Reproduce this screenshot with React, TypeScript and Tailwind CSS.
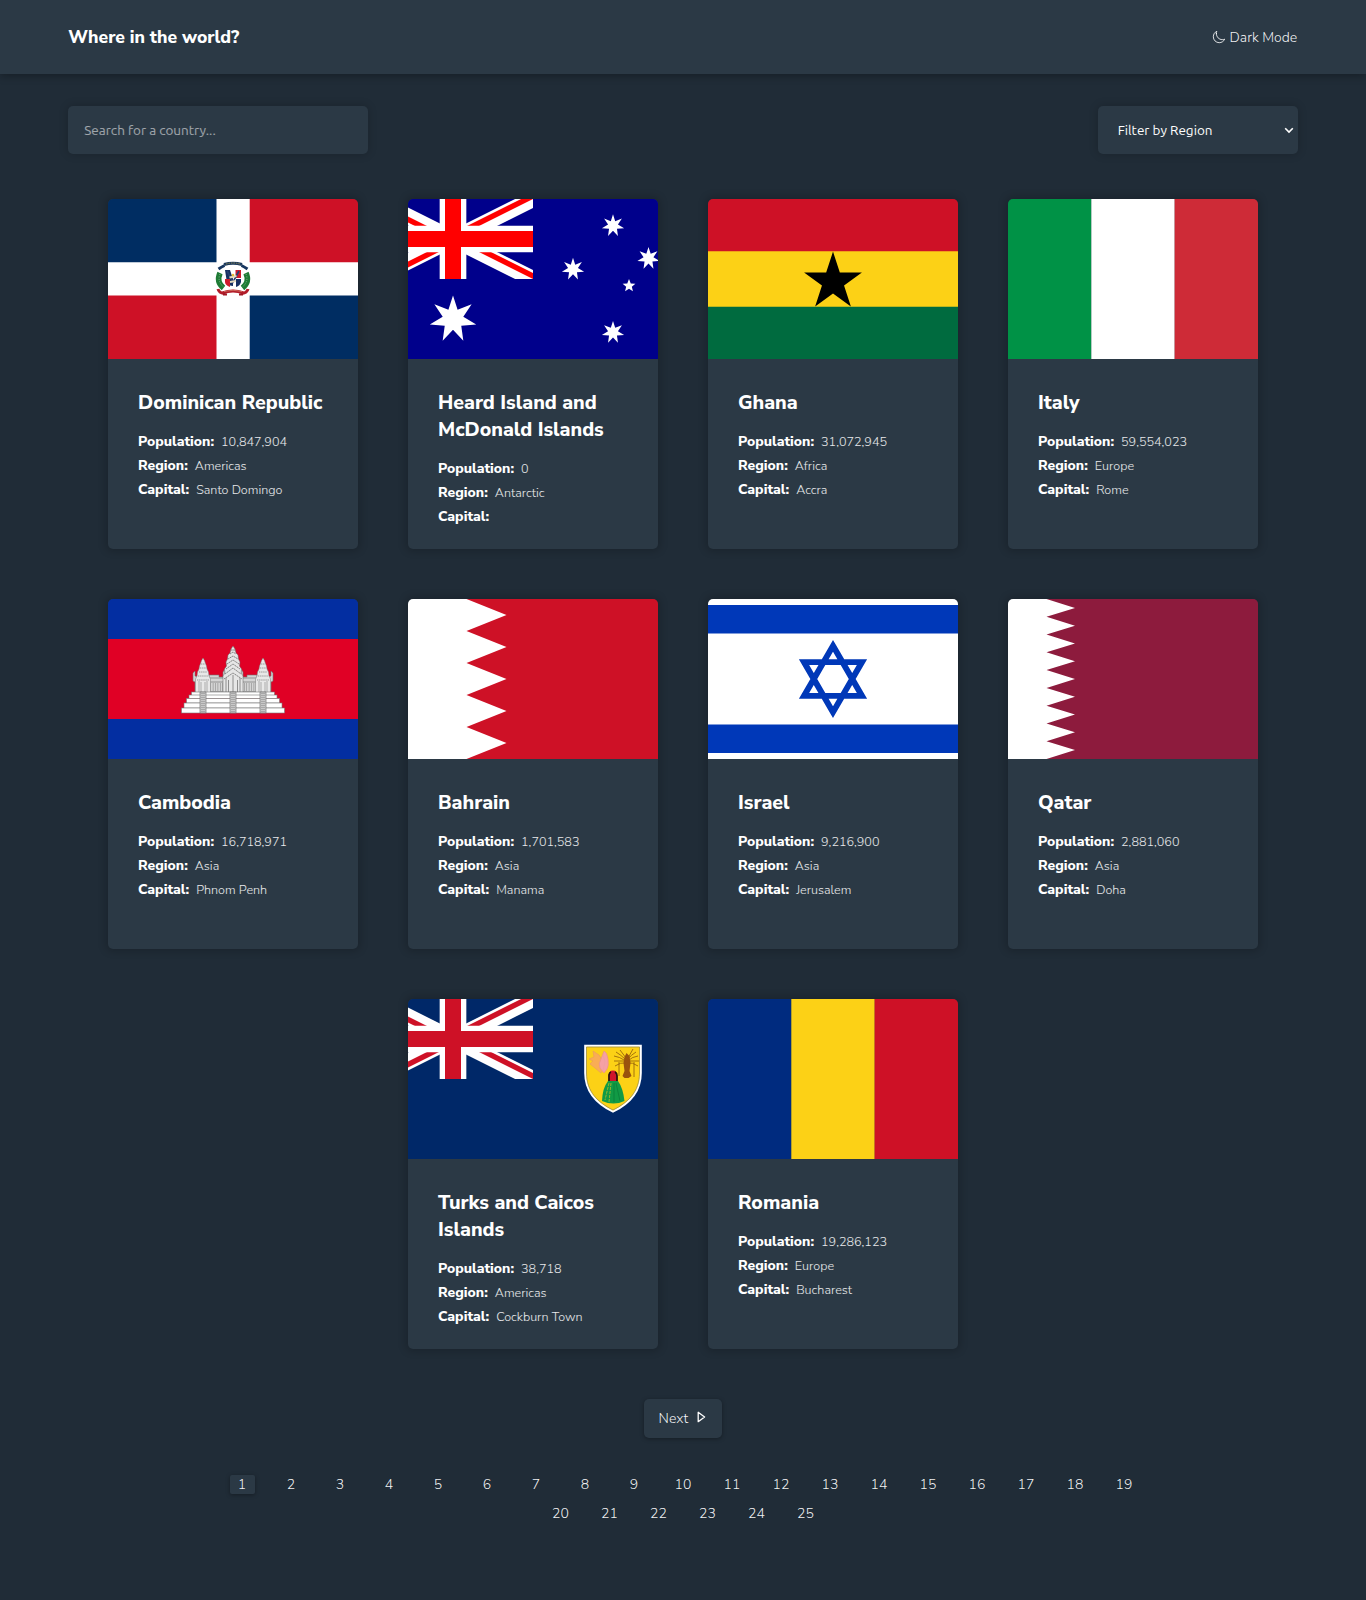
import React from "react";
import { IoMoonOutline } from "react-icons/io5";

function starPoints(cx: number, cy: number, r: number, n: number, ratio: number) {
  const pts: string[] = [];
  for (let i = 0; i < n * 2; i++) {
    const a = (Math.PI * i) / n - Math.PI / 2;
    const k = i % 2 === 0 ? r : r * ratio;
    pts.push(`${(cx + k * Math.cos(a)).toFixed(2)},${(cy + k * Math.sin(a)).toFixed(2)}`);
  }
  return pts.join(" ");
}

function FlagSvg({ children, box = "0 0 250 160" }: { children: React.ReactNode; box?: string }) {
  return (
    <svg viewBox={box} className="block h-40 w-full shrink-0" preserveAspectRatio="none" aria-hidden="true">
      {children}
    </svg>
  );
}

function UnionJack({ id, red }: { id: string; red: string }) {
  return (
    <g transform="scale(2.66667)">
      <clipPath id={`${id}-a`}>
        <path d="M0 0h60v30H0z" />
      </clipPath>
      <clipPath id={`${id}-b`}>
        <path d="M30 15h30v15zv15H0zH0V0zV0h30z" />
      </clipPath>
      <g clipPath={`url(#${id}-a)`}>
        <path d="M0 0l60 30m0-30L0 30" stroke="#fff" strokeWidth="6" />
        <path d="M0 0l60 30m0-30L0 30" stroke={red} strokeWidth="4" clipPath={`url(#${id}-b)`} />
        <path d="M30 0v30M0 15h60" stroke="#fff" strokeWidth="10" />
        <path d="M30 0v30M0 15h60" stroke={red} strokeWidth="6" />
      </g>
    </g>
  );
}

function DominicanRepublic() {
  return (
    <FlagSvg>
      <path fill="#fff" d="M108 0h34v160h-34zM0 63h250v34H0z" />
      <path fill="#002d62" d="M0 0h108.5v63.2H0zM141.7 96.6H250V160H141.7z" />
      <path fill="#ce1126" d="M141.7 0H250v63.2H141.7zM0 96.6h108.5V160H0z" />
      <path d="M110.500 70q3-2 6-3.500M139.500 70q-3-2-6-3.500" fill="none" stroke="#16355f" strokeWidth="3" />
      <path d="M116 65.500q9-2.500 18 0" fill="none" stroke="#1d3a5c" strokeWidth="3.200" />
      <path d="M118 65q7-2 14 0" fill="none" stroke="#8a8554" strokeWidth="1" strokeDasharray="1.500 1" />
      <path d="M112 74q-4 9 3.500 15M138 74q4 9-3.500 15" fill="none" stroke="#1e7b35" strokeWidth="5.600" />
      <path d="M112 75q-3 7 3.500 13M138 75q3 7-3.500 13" fill="none" stroke="#8dba95" strokeWidth="1" strokeDasharray="1 1.500" />
      <path fill="#fff" d="M116 70h18v13q-1 5-9 7.500-8-2.500-9-7.500z" />
      <path fill="#172f62" d="M117 71h5l3 9v7q-4 0-6-3zM128 80h5v3q-1 4-5 5z" />
      <path fill="#cf1a2c" d="M127.500 71h5.500v8h-5.500zM117 80h5v8q-5-2-5-5z" />
      <path d="M119 72l6 11 6-11" fill="none" stroke="#273f70" strokeWidth="1.600" />
      <path d="M121.500 78.500l7-1.500M122 83l6-1" stroke="#e3dac0" strokeWidth="1.800" />
      <circle cx="125" cy="76" r="1.300" fill="#e9bd35" />
      <path d="M110 90q1 4 6 4.500M140 90q-1 4-6 4.500M114.500 94q10.500-4 21 0" fill="none" stroke="#b31c29" strokeWidth="3" />
      <path d="M115 95.500h4M131 95.500h4" stroke="#a01825" strokeWidth="2" />
      <path d="M116 92.500q9-2.500 18 0" fill="none" stroke="#cf6a5c" strokeWidth="1" />
    </FlagSvg>
  );
}

function HeardIsland() {
  return (
    <FlagSvg box="35 0 250 160">
      <path fill="#00008b" d="M0 0h320v160H0z" />
      <UnionJack id="hm" red="#f00" />
      <g fill="#fff">
        <polygon points={starPoints(80, 120.2, 23.8, 7, 0.444)} />
        <polygon points={starPoints(240, 26.7, 11.4, 7, 0.444)} />
        <polygon points={starPoints(200, 70.2, 11.4, 7, 0.444)} />
        <polygon points={starPoints(275.5, 59.4, 11.4, 7, 0.444)} />
        <polygon points={starPoints(240, 133.4, 11.4, 7, 0.444)} />
        <polygon points={starPoints(256, 86.8, 6.7, 5, 0.444)} />
      </g>
    </FlagSvg>
  );
}

function Ghana() {
  return (
    <FlagSvg>
      <path fill="#006b3f" d="M0 107h250v53H0z" />
      <path fill="#fcd116" d="M0 52h250v55.800H0z" />
      <path fill="#ce1126" d="M0 0h250v52.2H0z" />
      <polygon points={starPoints(125, 83, 30.4, 5, 0.382)} />
    </FlagSvg>
  );
}

function Tricolour({ colours }: { colours: [string, string, string] }) {
  return (
    <FlagSvg>
      {colours.map((c, i) => (
        <rect key={c} x={i * 83.33} width="83.4" height="160" fill={c} />
      ))}
    </FlagSvg>
  );
}

function SideTower({ x }: { x: number }) {
  return (
    <g transform={`translate(${x} 0)`}>
      <path d="M0 59l1.500 2.500 1 3 1 2.500 .5 3 1.500 3 .5 4 1.500 3v14h-15v-14l1.500-3 .5-4 1.500-3 .5-3 1-2.500 1-3z" fill="#e8e8e8" stroke="#777" strokeWidth="0.5" />
      <path d="M-2 65h4M-3 69h6M-4 73h8M-5 77h10M-6 81H6" stroke="#777" strokeWidth="0.7" strokeDasharray="1.400 .7" />
      <path d="M-4 82v11M-2 83v10M2 83v10M4 82v11" stroke="#858585" strokeWidth="0.6" />
    </g>
  );
}

function Cambodia() {
  const steps = [
    [83.5, 93],
    [81, 96],
    [78.5, 99.5],
    [76, 104],
    [73.5, 109],
  ];
  return (
    <FlagSvg>
      <path fill="#032ea1" d="M0 0h250v160H0z" />
      <path fill="#e00025" d="M0 40h250v80H0z" />
      <path d="M85 82v-8l2-2v5l3 1h11v-2h10v2h4v-5l2-3v5h16v-5l2 3v5h4v-2h10v2h11l3-1v-5l2 2v8l-2 1v10H87V83z" fill="#d4d4d4" stroke="#747474" strokeWidth="0.6" />
      <path d="M101 79h48M101 83h48M88 93h74" stroke="#777" strokeWidth="0.7" />
      <path d="M100 88h50" stroke="#8a8a8a" strokeWidth="8" strokeDasharray=".6 1.800" />
      <path d="M90 88h10M150 88h10" stroke="#858585" strokeWidth="9" strokeDasharray=".6 2" />
      <SideTower x={95} />
      <SideTower x={155} />
      <path d="M125 47l2 3 1 4 2 2 .5 4 1.500 3-.5 4 2 3-.5 4 2 3v16h-20V77l2-3-.5-4 2-3-.5-4 1.500-3 .5-4 2-2 1-4z" fill="#e6e6e6" stroke="#666" strokeWidth="0.5" />
      <path d="M123 51h4M122 55l3-2 3 2M120 60l5-3 5 3M119 65l6-4 6 4M118 70l7-5 7 5M117 75l8-6 8 6M116 80l9-6 9 6" fill="none" stroke="#6b6b6b" strokeWidth="0.8" strokeDasharray="1.700 .5" />
      <path d="M118 79v14M120.500 81v12M129.500 81v12M132 79v14M125 76v17" stroke="#777" strokeWidth="0.8" />
      {steps.map(([x, y], i) => (
        <rect key={x} x={x} y={y} width={250 - 2 * x} height={i === 4 ? 5 : i === 3 ? 5 : i === 2 ? 4.5 : 3.5} fill="#fff" stroke="#777" strokeWidth="0.6" />
      ))}
      {[95, 125, 155].map((x) => (
        <g key={x}>
          <path d={`M${x - 3} 93h6v21h-6z`} fill="#c8c8c8" stroke="#777" strokeWidth="0.7" />
          <path d={`M${x} 94v20`} stroke="#888" strokeWidth="4" strokeDasharray=".5 1.500" />
        </g>
      ))}
    </FlagSvg>
  );
}

function Serrated({ teeth, inner, outer, colour }: { teeth: number; inner: number; outer: number; colour: string }) {
  const h = 160 / teeth;
  let d = `M250 0H${inner}`;
  let w = `M0 0H${inner}`;
  for (let i = 0; i < teeth; i++) {
    const tooth = `L${outer} ${(i + 0.5) * h}L${inner} ${(i + 1) * h}`;
    d += tooth;
    w += tooth;
  }
  return (
    <FlagSvg>
      <path fill="#fff" d={`M${inner - 1} 0H${outer + 1}V160H${inner - 1}z`} />
      <path fill="#fff" d={`${w}H0z`} />
      <path fill={colour} d={`${d}H250z`} />
    </FlagSvg>
  );
}

function Israel() {
  return (
    <FlagSvg>
      <path fill="#fff" d="M0 0h250v160H0z" />
      <path fill="#0038b8" d="M0 6h250v28.400H0zM0 125.600h250V154H0z" />
      <path d="M125 46.800l29 50.100H96zM125 113.200L96 63.100h58z" fill="none" stroke="#0038b8" strokeWidth="5.900" />
    </FlagSvg>
  );
}

function TurksAndCaicos() {
  return (
    <FlagSvg box="35 0 250 160">
      <path fill="#002868" d="M0 0h320v160H0z" />
      <UnionJack id="tc" red="#ce1126" />
      <path d="M212.200 46.700h55.600V74c0 20-12 31-27.800 38.700C224.200 105 212.200 94 212.200 74z" fill="#fcd116" stroke="#fff" strokeWidth="2" />
      <path d="M213.500 48h53v26c0 19-11.500 29.500-26.500 37-15-7.500-26.500-18-26.500-37z" fill="none" stroke="#7f7852" strokeWidth="0.6" />
      <path d="M216 60l5-2-1-6 6 4 3 5 1 10-2 3-6-5-5-4 3-3z" fill="#f9ad55" stroke="#e79b61" strokeWidth="0.6" />
      <path d="M231 52q3 1 4 8t-1 10l-3 4-4-5q-2-4 1-9z" fill="#f6a0a5" stroke="#eb9089" strokeWidth="0.7" />
      <path d="M230 56l2 7-2 8" fill="none" stroke="#eda0a0" strokeWidth="0.7" />
      <path d="M241 57q6 1 10 4M265 57q-6 1-9 4M243 53q5 3 9 7M263 53q-5 3-8 7M241 62h11M266 62h-11M242 67q6-4 10-3M265 67q-6-4-10-3M247 51l6 8M260 50l-5 9M246 63v14M261 63v15" fill="none" stroke="#8e5a0b" strokeWidth="0.8" />
      <path d="M253.500 54l3 3 1 7-1 8 2 5-3 2h-4l-2-2 2-5-1-8 1-6z" fill="#9a530d" />
      <path d="M235.500 82v-5q0-5.500 4.500-5.500t4.500 5.500v5z" fill="#cf142b" />
      <path d="M236 82v-6q.5-2.500 2-3M242 73q2 1 2 4v5" fill="none" stroke="#24150e" strokeWidth="1.700" />
      <path d="M235 82h10q5 7 6.500 20-11 5-22.500 0 .5-13 6-20z" fill="#119a45" />
      <path d="M236 84l-4 17M238 84l-2 19" stroke="#cfc225" strokeWidth="0.7" strokeDasharray="3 1" />
      <path d="M241 84v19M243 84l4 18" stroke="#087434" strokeWidth="0.6" />
    </FlagSvg>
  );
}

type Country = { name: string; population: string; region: string; capital: string; flag: React.ReactNode };

const countries: Country[] = [
  { name: "Dominican Republic", population: "10,847,904", region: "Americas", capital: "Santo Domingo", flag: <DominicanRepublic /> },
  { name: "Heard Island and McDonald Islands", population: "0", region: "Antarctic", capital: "", flag: <HeardIsland /> },
  { name: "Ghana", population: "31,072,945", region: "Africa", capital: "Accra", flag: <Ghana /> },
  { name: "Italy", population: "59,554,023", region: "Europe", capital: "Rome", flag: <Tricolour colours={["#009246", "#ffffff", "#ce2b37"]} /> },
  { name: "Cambodia", population: "16,718,971", region: "Asia", capital: "Phnom Penh", flag: <Cambodia /> },
  { name: "Bahrain", population: "1,701,583", region: "Asia", capital: "Manama", flag: <Serrated teeth={5} inner={58.5} outer={98.5} colour="#ce1126" /> },
  { name: "Israel", population: "9,216,900", region: "Asia", capital: "Jerusalem", flag: <Israel /> },
  { name: "Qatar", population: "2,881,060", region: "Asia", capital: "Doha", flag: <Serrated teeth={9} inner={38.5} outer={67} colour="#8d1b3d" /> },
  { name: "Turks and Caicos Islands", population: "38,718", region: "Americas", capital: "Cockburn Town", flag: <TurksAndCaicos /> },
  { name: "Romania", population: "19,286,123", region: "Europe", capital: "Bucharest", flag: <Tricolour colours={["#002b7f", "#fcd116", "#ce1126"]} /> },
];

function Fact({ label, value }: { label: string; value: string }) {
  return (
    <p className="flex h-6 items-baseline whitespace-nowrap leading-6">
      <b className="mr-[7px] text-[14px] font-extrabold">{label}:</b>
      <span className="text-[12.6px] font-light text-white/90">{value}</span>
    </p>
  );
}

function Card({ country }: { country: Country }) {
  return (
    <article className="flex h-[350px] w-[250px] flex-col overflow-hidden rounded-[5px] bg-[#2b3945] shadow-[0_0_8px_2px_rgba(0,0,0,0.2)]">
      {country.flag}
      <div className="px-[30px] pt-[30px]">
        <h2 className="mb-3.5 text-[19.6px] leading-[27px] font-extrabold">{country.name}</h2>
        <Fact label="Population" value={country.population} />
        <Fact label="Region" value={country.region} />
        <Fact label="Capital" value={country.capital} />
      </div>
    </article>
  );
}

export default function App() {
  return (
    <div className="min-h-[1600px] bg-[#202c37] font-['Nunito_Sans','Nunito','Lato',sans-serif] text-white">
      <header className="flex h-[74px] items-center justify-between bg-[#2b3945] px-[68.3px] shadow-[0_2px_8px_rgba(0,0,0,0.3)]">
        <h1 className="text-[17.6px] font-extrabold">Where in the world?</h1>
        <button className="flex items-center gap-1 pr-[0.5px] text-[14px] font-light text-white/95">
          <IoMoonOutline className="size-[14px]" />
          <span>Dark Mode</span>
        </button>
      </header>

      <div className="flex items-center justify-between px-[68.3px] pt-8">
        <input
          placeholder="Search for a country..."
          className="h-12 w-[300px] rounded-[5px] bg-[#2b3945] px-4 font-['Ubuntu','Noto_Sans',sans-serif] text-[13.5px] shadow-[0_0_10px_rgba(0,0,0,0.2)] outline-none placeholder:text-white/55"
        />
        <button className="flex h-12 w-[200px] items-center justify-between rounded-[5px] bg-[#2b3945] pr-1 pl-5 font-['Ubuntu','Noto_Sans',sans-serif] text-[13.5px] shadow-[0_0_10px_rgba(0,0,0,0.2)]">
          <span className="pt-px">Filter by Region</span>
          <svg viewBox="0 0 10 10" className="size-[10px]" fill="none" stroke="white" strokeWidth="1.6">
            <path d="M1.200 3.200L5 7l3.800-3.800" />
          </svg>
        </button>
      </div>

      <main className="mx-auto mt-[45px] flex w-[1200px] flex-wrap justify-center gap-[50px]">
        {countries.map((c) => (
          <Card key={c.name} country={c} />
        ))}
      </main>

      <div className="mt-[50px] flex justify-center">
        <button className="flex h-[39px] w-[78px] items-center rounded-[5px] bg-[#2b3945] pl-[14.6px] text-[14px] font-light shadow-[0_1px_4px_rgba(0,0,0,0.35)]">
          <span className="w-[38px] text-left text-white/95">Next</span>
          <svg viewBox="0 0 9 12" className="mb-[3px] h-3 w-[9px]" fill="none" stroke="white" strokeWidth="1.3" strokeLinejoin="round">
            <path d="M1.200 1.300v9.400L7.600 6z" />
          </svg>
        </button>
      </div>

      <nav className="mx-auto mt-[37px] flex w-[960px] flex-wrap justify-center gap-y-[10px]">
        {Array.from({ length: 25 }, (_, i) => (
          <a key={i} className="flex w-[49px] justify-center text-[14px] leading-[19px] font-light text-white/95">
            <span className={i === 0 ? "w-[25px] rounded-[2px] bg-[#2b3945] text-center shadow-[0_1px_4px_rgba(0,0,0,0.35)]" : ""}>{i + 1}</span>
          </a>
        ))}
      </nav>
    </div>
  );
}
